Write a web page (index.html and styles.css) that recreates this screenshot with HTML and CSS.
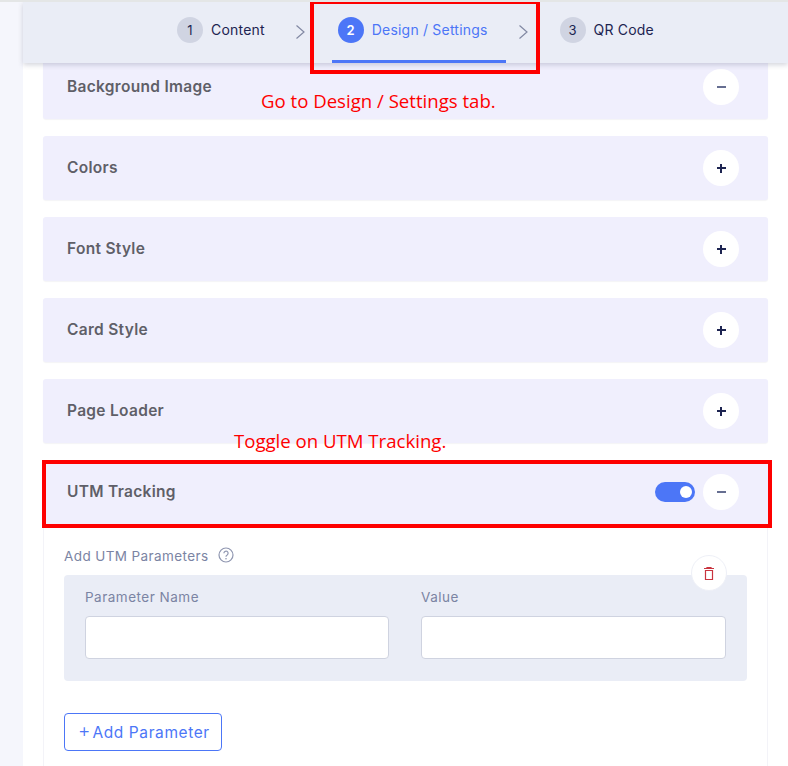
FILE: index.html
```html
<!DOCTYPE html>
<html lang="en">
<head>
  <meta charset="UTF-8" />
  <title>Design / Settings</title>
  <link rel="stylesheet" href="styles.css">
</head>
<body>
  <div class="page">
    <div class="side"></div>
    <div class="main">
      <div class="tabs">
        <div class="tab">
          <span class="num">1</span>
          <span class="tab-text">Content</span>
        </div>
        <svg class="chevron" width="10" height="16" viewBox="0 0 10 16"><path d="M1.5 1.5l7.5 6.5-7.5 6.5" /></svg>
        <div class="tab active">
          <span class="num">2</span>
          <span class="tab-text">Design / Settings</span>
        </div>
        <svg class="chevron" width="10" height="16" viewBox="0 0 10 16"><path d="M1.5 1.5l7.5 6.5-7.5 6.5" /></svg>
        <div class="tab">
          <span class="num">3</span>
          <span class="tab-text">QR Code</span>
        </div>
      </div>

      <div class="list">
        <div class="row">
          <span class="row-title">Background Image</span>
          <button class="round"><span class="minus"></span></button>
        </div>
        <div class="row">
          <span class="row-title">Colors</span>
          <button class="round"><span class="plus"></span></button>
        </div>
        <div class="row">
          <span class="row-title">Font Style</span>
          <button class="round"><span class="plus"></span></button>
        </div>
        <div class="row">
          <span class="row-title">Card Style</span>
          <button class="round"><span class="plus"></span></button>
        </div>
        <div class="row">
          <span class="row-title">Page Loader</span>
          <button class="round"><span class="plus"></span></button>
        </div>

        <div class="section">
          <div class="row">
            <span class="row-title">UTM Tracking</span>
            <span class="switch"><span class="knob"></span></span>
            <button class="round"><span class="minus"></span></button>
          </div>
          <div class="section-body">
            <div class="params-label">
              <span>Add UTM Parameters</span>
              <svg width="16" height="16" viewBox="0 0 16 16" class="help">
                <circle cx="8" cy="8" r="7" />
                <path d="M5.9 6.2a2.1 2.1 0 1 1 3.3 1.7c-.8.5-1.2 1-1.2 1.8" />
                <circle class="dot" cx="8" cy="11.7" r=".8" />
              </svg>
            </div>
            <div class="param-box">
              <button class="delete">
                <svg width="10" height="13" viewBox="0 0 10 13">
                  <path d="M0 1.5h10M3 1.5V.5h4v1M1.5 3.5h7v9h-7z" />
                </svg>
              </button>
              <div class="field">
                <label>Parameter Name</label>
                <input type="text" />
              </div>
              <div class="field">
                <label>Value</label>
                <input type="text" />
              </div>
            </div>
            <button class="add-btn"><span class="add-plus">+</span>Add Parameter</button>
          </div>
        </div>
      </div>
    </div>
  </div>

  <!-- annotations drawn on top of the screenshot -->
  <div class="mark mark-tab"></div>
  <div class="mark mark-utm"></div>
  <div class="note note-tab">Go to Design / Settings tab.</div>
  <div class="note note-utm">Toggle on UTM Tracking.</div>
</body>
</html>
```

FILE: styles.css
```css
* {
  box-sizing: border-box;
  margin: 0;
  padding: 0;
}

html, body {
  height: 766px;
  overflow: hidden;
}

body {
  position: relative;
  font-family: Inter, "Open Sans", sans-serif;
  background-color: white;
  color: #1d2451;
  border-top: 2px solid #e4e6e6;
}

.page {
  display: flex;
  height: 764px;
}

.side {
  width: 23px;
  flex-shrink: 0;
  background-color: #f5f6fc;
}

.main {
  flex: 1;
  min-width: 0;
}

.tabs {
  position: relative;
  z-index: 2;
  display: flex;
  align-items: center;
  height: 61px;
  padding-left: 148px;
  background-color: #eaedf6;
  box-shadow: 0 2px 5px rgba(60, 66, 100, 0.22);
}

.tab {
  display: flex;
  align-items: center;
  gap: 8px;
  height: 100%;
  padding: 0 18px 3px 6px;
  font-size: 14px;
  letter-spacing: 0.2px;
  border-bottom: 3px solid transparent;
}

.tab.active {
  color: #4c76f7;
  border-bottom-color: #4c76f7;
  margin: 0 12px 0 27px;
}

.num {
  display: flex;
  align-items: center;
  justify-content: center;
  width: 26px;
  height: 26px;
  border-radius: 50%;
  background-color: #d0d4e2;
  color: #1d2451;
  font-size: 13px;
}

.active .num {
  background-color: #4c76f7;
  color: white;
  font-weight: 600;
}

.chevron {
  margin: -1px 0 0 12px;
  fill: none;
  stroke: #8289a3;
  stroke-width: 1.2;
}

.active + .chevron {
  margin-left: 0;
  margin-right: 26px;
}

.list {
  display: flex;
  flex-direction: column;
  gap: 17px;
  margin: -8px 20px 0;
}

.row {
  display: flex;
  align-items: center;
  height: 64px;
  padding: 0 29px 0 24px;
  background-color: #f0effd;
  border-radius: 3px;
  box-shadow: 0 1px 1px rgba(60, 66, 100, 0.06);
}

.row-title {
  flex: 1;
  margin-top: -2px;
  font-size: 15.5px;
  font-weight: 600;
  letter-spacing: 0.3px;
  color: #5f5f68;
}

.round {
  display: flex;
  align-items: center;
  justify-content: center;
  width: 36px;
  height: 36px;
  border: none;
  border-radius: 50%;
  background-color: white;
}

.minus, .plus {
  position: relative;
  display: block;
  width: 9px;
  height: 2px;
  background-color: #1d2451;
}

.minus {
  background-color: #666e91;
}

.plus {
  height: 1.5px;
}

.plus::after {
  content: "";
  position: absolute;
  left: 3.75px;
  top: -3.75px;
  width: 1.5px;
  height: 9px;
  background-color: #1d2451;
}

.switch {
  display: flex;
  justify-content: flex-end;
  align-items: center;
  width: 40px;
  height: 20px;
  margin-right: 8px;
  padding-right: 3px;
  border-radius: 10px;
  background-color: #4c76f7;
}

.knob {
  width: 12px;
  height: 12px;
  border-radius: 50%;
  background-color: white;
}

.section-body {
  height: 260px;
  padding: 22px 20px 0 20px;
  border: 1px solid #f3f3f8;
  border-top: none;
}

.params-label {
  display: flex;
  align-items: center;
  gap: 9px;
  height: 20px;
  font-size: 13.5px;
  letter-spacing: 0.4px;
  color: #7b84a3;
}

.help {
  margin-top: -3px;
  fill: none;
  stroke: #8f96b0;
  stroke-width: 1.2;
}

.help .dot {
  fill: #8f96b0;
  stroke: none;
}

.param-box {
  position: relative;
  display: grid;
  grid-template-columns: 304px 305px;
  gap: 32px;
  height: 106px;
  margin-top: 9px;
  padding: 14px 21px 0;
  background-color: #eaedf6;
  border-radius: 4px;
}

.field label {
  display: block;
  height: 27px;
  font-size: 13.5px;
  letter-spacing: 0.5px;
  color: #7b84a3;
}

.field input {
  display: block;
  width: 100%;
  height: 43px;
  background-color: white;
  border: 1px solid #cfd3e0;
  border-radius: 4px;
}

.delete {
  position: absolute;
  top: -20px;
  right: 20px;
  display: flex;
  align-items: center;
  justify-content: center;
  width: 36px;
  height: 36px;
  background-color: white;
  border: 1px solid #eef0f7;
  border-radius: 50%;
}

.delete svg {
  fill: none;
  stroke: #c9343f;
  stroke-width: 1.2;
}

.add-btn {
  display: flex;
  align-items: center;
  width: 158px;
  height: 38px;
  margin-top: 32px;
  padding-left: 13px;
  font-family: inherit;
  font-size: 15.5px;
  letter-spacing: 0.6px;
  color: #4c76f7;
  background-color: white;
  border: 1px solid #4c76f7;
  border-radius: 4px;
}

.add-plus {
  margin: -4px 2px 0 0;
  font-size: 19px;
  font-weight: 300;
  letter-spacing: 0;
}

.mark {
  position: absolute;
  z-index: 3;
  border: 4px solid #fe0000;
}

.mark-tab {
  left: 310px;
  top: -2px;
  width: 230px;
  height: 74px;
}

.mark-utm {
  left: 42px;
  top: 458px;
  width: 730px;
  height: 68px;
}

.note {
  position: absolute;
  z-index: 3;
  font-family: "Open Sans", sans-serif;
  font-size: 18.6px;
  line-height: 24px;
  color: #fe0000;
  white-space: nowrap;
}

.note-tab {
  left: 261px;
  top: 87px;
}

.note-utm {
  left: 234px;
  top: 427px;
}
```
